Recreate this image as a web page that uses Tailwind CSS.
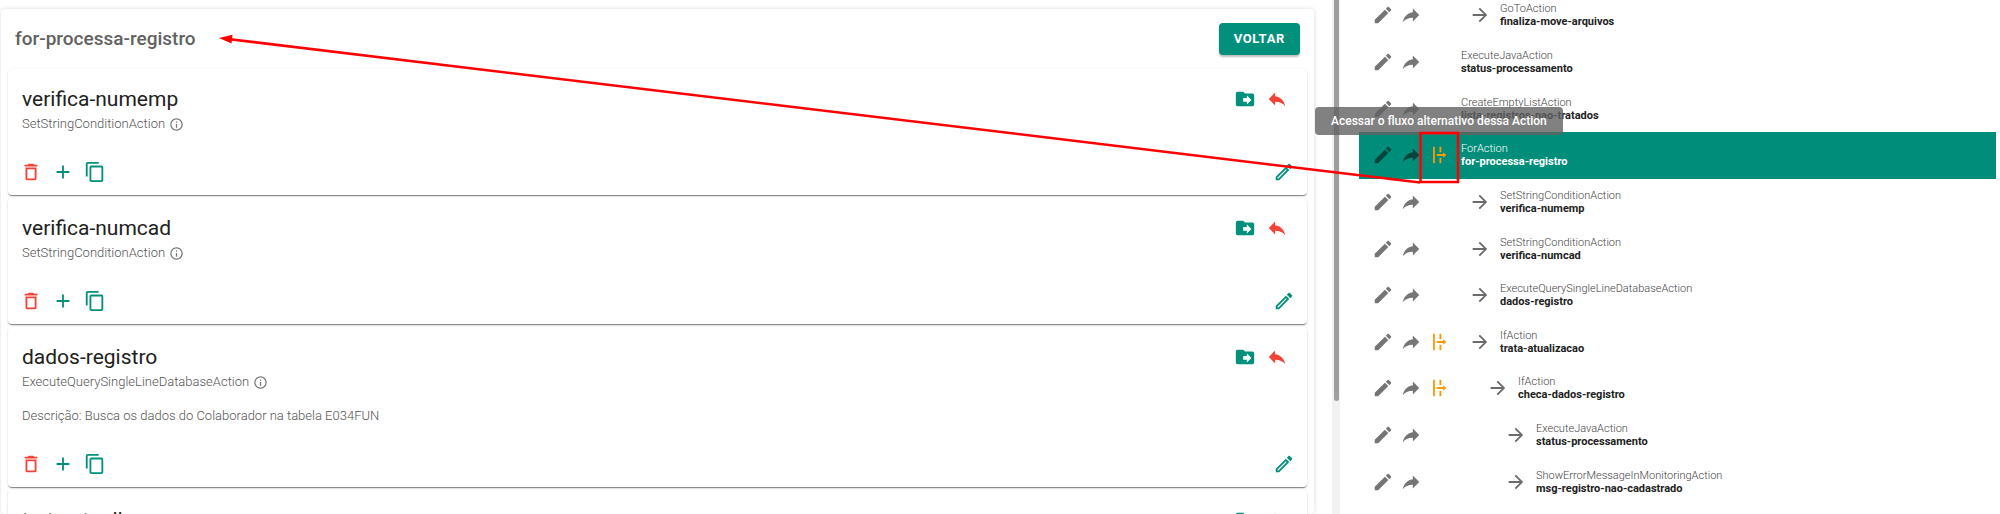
<!DOCTYPE html>
<html lang="pt-BR">
<head>
  <meta charset="UTF-8" />
  <meta name="viewport" content="width=device-width, initial-scale=1.0" />
  <title>for-processa-registro</title>
  <script src="https://cdn.jsdelivr.net/npm/@tailwindcss/browser@4"></script>
</head>
<body class="bg-white font-['Roboto',sans-serif] text-[#212121]">

  <!-- icons -->
  <svg class="hidden">
    <symbol id="i-delete" viewBox="0 0 24 24"><path d="M6 19a2 2 0 0 0 2 2h8a2 2 0 0 0 2-2V7H6v12M8 9h8v10H8V9m7.500-5-1-1h-5l-1 1H5v2h14V4h-3.500z" /></symbol>
    <symbol id="i-plus" viewBox="0 0 24 24"><path d="M19 13h-6v6h-2v-6H5v-2h6V5h2v6h6v2z" /></symbol>
    <symbol id="i-copy" viewBox="0 0 24 24"><path d="M19 21H8V7h11m0-2H8a2 2 0 0 0-2 2v14a2 2 0 0 0 2 2h11a2 2 0 0 0 2-2V7a2 2 0 0 0-2-2m-3-4H4a2 2 0 0 0-2 2v14h2V3h12V1z" /></symbol>
    <symbol id="i-pencil-outline" viewBox="0 0 24 24"><path d="m14.060 9.020.92.92L5.920 19H5v-.92l9.060-9.060M17.660 3c-.25 0-.51.1-.7.290l-1.830 1.830 3.750 3.750 1.830-1.830c.39-.39.39-1.040 0-1.410l-2.340-2.340c-.2-.2-.45-.29-.71-.29m-3.600 3.190L3 17.250V21h3.750L17.810 9.940l-3.750-3.750z" /></symbol>
    <symbol id="i-pencil" viewBox="0 0 24 24"><path d="M20.710 7.040c.39-.39.39-1.040 0-1.410l-2.340-2.340c-.37-.39-1.020-.39-1.410 0l-1.840 1.830 3.750 3.750M3 17.250V21h3.750L17.810 9.930l-3.750-3.750L3 17.250z" /></symbol>
    <symbol id="i-share" viewBox="0 0 24 24"><path d="m21 12-7-7v4C7 10 4 15 3 20c2.500-3.500 6-5.100 11-5.100V19l7-7z" /></symbol>
    <symbol id="i-reply" viewBox="0 0 24 24"><path d="M10 9V5l-7 7 7 7v-4.100c5 0 8.500 1.600 11 5.100-1-5-4-10-11-11z" /></symbol>
    <symbol id="i-folder" viewBox="0 0 24 24"><path d="M14 18v-3h-4v-4h4V8l5 5m1-7h-8l-2-2H4a2 2 0 0 0-2 2v12a2 2 0 0 0 2 2h16a2 2 0 0 0 2-2V8a2 2 0 0 0-2-2z" /></symbol>
    <symbol id="i-info" viewBox="0 0 24 24"><path d="M11 9h2V7h-2m1 13c-4.410 0-8-3.590-8-8s3.590-8 8-8 8 3.590 8 8-3.590 8-8 8m0-18a10 10 0 1 0 0 20 10 10 0 0 0 0-20m-1 15h2v-6h-2v6z" /></symbol>
    <symbol id="i-arrow" viewBox="0 0 24 24"><path d="M4 11v2h12l-5.500 5.500 1.420 1.420L19.840 12l-7.920-7.920L10.500 5.500 16 11H4z" /></symbol>
    <symbol id="i-flow" viewBox="0 0 24 24"><path d="M5.500 3h2v18h-2V3m7 0h2v6h-2V3m0 12h2v6h-2v-6m-3-4h7V9l3.500 3-3.500 3v-2h-7v-2z" /></symbol>
  </svg>

  <div class="relative flex h-screen overflow-hidden">
    <main class="flex w-[67%]">
      <section class="mt-[9px] mr-[18px] ml-px min-w-0 flex-1 rounded shadow-[0_0_5px_rgba(0,0,0,0.14)]">
        <header class="flex h-[60px] items-center justify-between px-[14px]">
          <h1 class="text-[19px] font-medium text-[#616161]">for-processa-registro</h1>
          <button class="h-8 rounded bg-[#00907c] px-[15px] text-[13px] font-bold tracking-wider text-white shadow-[0_2px_2px_rgba(0,0,0,0.25)]">VOLTAR</button>
        </header>
        <div id="cards" class="flex flex-col gap-[3px] px-[7px]"></div>
      </section>
      <div class="flex w-2 shrink-0 justify-center bg-[#f1f1f1]">
        <div class="h-[78%] w-[5px] rounded-b-full bg-[#9e9e9e]"></div>
      </div>
    </main>

    <aside class="flex-1 pr-1 pl-[19px]">
      <ul id="tree" class="-mt-2 flex h-full flex-col pb-px"></ul>
    </aside>

    <div role="tooltip" class="absolute top-[107px] left-[1315px] rounded bg-[#616161]/80 px-4 py-1 text-xs leading-5 font-medium text-white">Acessar o fluxo alternativo dessa Action</div>

    <!-- red arrow and box -->
    <svg class="pointer-events-none absolute top-0 left-0" width="2000" height="514" fill="none" stroke="#ff0000" stroke-width="2.500">
      <path d="M228 39 1420 182.500" />
      <path d="M219 38 232.500 34.800 231.500 43.500z" fill="#ff0000" stroke="none" />
      <rect x="1420.500" y="133" width="37.500" height="49" />
    </svg>
  </div>

  <script>
    const cards = [
      { name: "verifica-numemp", type: "SetStringConditionAction" },
      { name: "verifica-numcad", type: "SetStringConditionAction" },
      { name: "dados-registro", type: "ExecuteQuerySingleLineDatabaseAction", desc: "Descrição: Busca os dados do Colaborador na tabela E034FUN" },
      { name: "trata-atualizacao", type: "IfAction" }
    ];

    const tree = [
      { type: "GoToAction", name: "finaliza-move-arquivos", level: 1 },
      { type: "ExecuteJavaAction", name: "status-processamento", level: 0 },
      { type: "CreateEmptyListAction", name: "lista-registros-nao-tratados", level: 0 },
      { type: "ForAction", name: "for-processa-registro", level: 0, flow: true, active: true },
      { type: "SetStringConditionAction", name: "verifica-numemp", level: 1 },
      { type: "SetStringConditionAction", name: "verifica-numcad", level: 1 },
      { type: "ExecuteQuerySingleLineDatabaseAction", name: "dados-registro", level: 1 },
      { type: "IfAction", name: "trata-atualizacao", level: 1, flow: true },
      { type: "IfAction", name: "checa-dados-registro", level: 2, flow: true },
      { type: "ExecuteJavaAction", name: "status-processamento", level: 3 },
      { type: "ShowErrorMessageInMonitoringAction", name: "msg-registro-nao-cadastrado", level: 3 }
    ];

    const indent = ["pl-2", "pl-[15px]", "pl-[33px]", "pl-[51px]"];

    function icon(name, size) {
      return `<svg class="${size} fill-current"><use href="#i-${name}" /></svg>`;
    }

    function button(name, label, color) {
      return `<button aria-label="${label}" class="${color}">${icon(name, "size-[22px]")}</button>`;
    }

    document.getElementById("cards").innerHTML = cards.map(c => `
      <article class="rounded bg-white pt-4 pb-3 shadow-[0_2px_1px_-1px_rgba(0,0,0,0.3),0_1px_1px_rgba(0,0,0,0.2),0_1px_3px_rgba(0,0,0,0.12)]">
        <div class="flex justify-between pr-[19px] pl-[14px]">
          <div>
            <h2 class="text-[21px] leading-[29px]">${c.name}</h2>
            <p class="flex items-center gap-1 text-[13px] leading-5 font-light text-[#555]">${c.type} ${icon("info", "size-[15px] text-[#757575]")}</p>
            ${c.desc ? `<p class="mt-[14px] text-[13px] leading-5 font-light text-[#555]">${c.desc}</p>` : ""}
          </div>
          <div class="flex h-7 items-center gap-[10px]">
            ${button("folder", "Mover", "text-[#00907c]")}
            ${button("reply", "Desfazer", "text-[#f44336]")}
          </div>
        </div>
        <div class="mt-[27px] flex h-[22px] items-center gap-[10px] px-3">
          ${button("delete", "Excluir", "text-[#f44336]")}
          ${button("plus", "Adicionar", "text-[#00907c]")}
          ${button("copy", "Copiar", "text-[#00907c]")}
          <span class="flex-1"></span>
          ${button("pencil-outline", "Editar", "text-[#00907c]")}
        </div>
      </article>
    `).join("");

    document.getElementById("tree").innerHTML = tree.map(t => `
      <li class="flex min-h-[46px] flex-1 items-center pl-[10px] ${t.active ? "bg-[#008e7b] text-white" : ""}">
        <div class="flex w-[84px] shrink-0 ${t.active ? "text-[#05453d]" : "text-[#757575]"}">
          <button aria-label="Editar" class="flex w-7 justify-center">${icon("pencil", "size-[22px]")}</button>
          <button aria-label="Ir para" class="flex w-7 justify-center">${icon("share", "size-[22px]")}</button>
          ${t.flow ? `<button aria-label="Fluxo alternativo" class="flex w-7 justify-center text-[#ff9800]">${icon("flow", "size-[22px]")}</button>` : ""}
        </div>
        <div class="flex items-center gap-2 ${indent[t.level]}">
          ${t.level ? `<span class="flex w-6 justify-center text-[#6b6b6b]">${icon("arrow", "size-[22px]")}</span>` : ""}
          <p class="text-[11px] leading-[13px]">
            <span class="block font-light ${t.active ? "text-white" : "text-[#444]"}">${t.type}</span>
            <span class="block font-bold">${t.name}</span>
          </p>
        </div>
      </li>
    `).join("");
  </script>
</body>
</html>
